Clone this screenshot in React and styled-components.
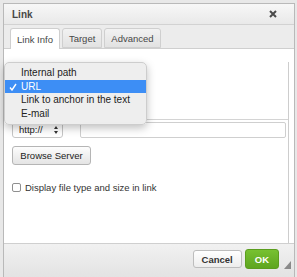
import React from 'react';
import styled, { createGlobalStyle } from 'styled-components';

const GlobalStyle = createGlobalStyle`
  html, body {
    margin: 0;
    padding: 0;
    background: #e8e8e8;
    font-family: "Liberation Sans", Arial, sans-serif;
    color: #333;
  }
`;

const Dialog = styled.div`
  position: relative;
  box-sizing: border-box;
  width: 292px;
  height: 274px;
  margin: 3px 0 0 3px;
  border: 1px solid #b9b9b9;
  border-bottom: none;
  background: #f0f0f0;
  display: flex;
  flex-direction: column;
`;

const TitleBar = styled.div`
  height: 20px;
  flex: none;
  display: flex;
  align-items: center;
  justify-content: space-between;
  padding: 0 17px 0 8px;
  background: linear-gradient(#f7f7f7, #e9e9e9);
  border-bottom: 1px solid #d2d2d2;
`;

const Title = styled.span`
  font-size: 10px;
  font-weight: bold;
  color: #474747;
`;

const Close = styled.svg`
  width: 8px;
  height: 8px;
  display: block;
`;

const TabStrip = styled.div`
  height: 24px;
  flex: none;
  box-sizing: border-box;
  display: flex;
  align-items: flex-end;
  gap: 2px;
  padding-left: 6px;
  background: #ececec;
  border-bottom: 1px solid #cfcfcf;
`;

const Tab = styled.div`
  box-sizing: border-box;
  height: ${(p) => (p.active ? '21px' : '20px')};
  margin-bottom: ${(p) => (p.active ? '-1px' : '0')};
  padding: 0 6px;
  display: flex;
  align-items: center;
  font-size: 9.5px;
  color: #474747;
  border: 1px solid #cfcfcf;
  border-bottom: ${(p) => (p.active ? 'none' : '1px solid #cfcfcf')};
  border-radius: 3px 3px 0 0;
  background: ${(p) => (p.active ? '#fff' : 'linear-gradient(#f2f2f2, #e2e2e2)')};
`;

const Content = styled.div`
  position: relative;
  flex: none;
  height: 195px;
  box-sizing: border-box;
  padding: 13px 5px 0 8px;
  background: #fff;
  border-bottom: 1px solid #cfcfcf;
`;

const Panel = styled.div`
  height: 100%;
  box-sizing: border-box;
  border-right: 1px solid #cdcdcd;
  font-size: 9.5px;
`;

/* link type select sits under the open menu */
const TypeField = styled.div`
  height: 57px;
`;

const Divider = styled.div`
  height: 1px;
  margin-left: 135px;
  background: #d4d4d4;
`;

const FieldRow = styled.div`
  display: flex;
  margin-top: 1px;
  padding-right: 2px;
  height: 17px;
`;

const Select = styled.div`
  box-sizing: border-box;
  width: 51px;
  height: 17px;
  border: 1px solid #c6c6c6;
  border-radius: 3px;
  background: #fff;
  display: flex;
  align-items: center;
  justify-content: space-between;
  padding: 0 4px 0 6px;
  font-size: 9.5px;
  color: #222;
`;

const Arrows = styled.svg`
  width: 4px;
  height: 8px;
  display: block;
`;

const TextInput = styled.div`
  flex: 1;
  margin-left: 17px;
  box-sizing: border-box;
  height: 16px;
  margin-top: 1px;
  border: 1px solid #cfcfcf;
  border-radius: 2px;
`;

const BrowseButton = styled.div`
  box-sizing: border-box;
  width: 79px;
  height: 19px;
  margin-top: 8px;
  border: 1px solid #b5b5b5;
  border-radius: 3px;
  background: linear-gradient(#fdfdfd, #e4e4e4);
  display: flex;
  align-items: center;
  justify-content: center;
  font-size: 9.5px;
  color: #222;
`;

const CheckRow = styled.label`
  display: flex;
  align-items: center;
  gap: 4px;
  margin-top: 17px;
  font-size: 9.5px;
  color: #333;
`;

const Box = styled.span`
  box-sizing: border-box;
  width: 9px;
  height: 9px;
  border: 1px solid #8f8f8f;
  border-radius: 2px;
  background: #fff;
`;

const Menu = styled.div`
  position: absolute;
  left: 0;
  top: 13px;
  box-sizing: border-box;
  width: 143px;
  padding: 3px 0 4px;
  background: rgba(238, 238, 238, 0.98);
  border: 1px solid #cdcdcd;
  border-radius: 5px;
  box-shadow: 0 3px 8px rgba(0, 0, 0, 0.25);
  font-size: 10px;
`;

const MenuItem = styled.div`
  height: 13.5px;
  display: flex;
  align-items: center;
  padding-left: 16px;
  position: relative;
  color: ${(p) => (p.selected ? '#fff' : '#222')};
  background: ${(p) => (p.selected ? '#3d8ef5' : 'transparent')};
`;

const Check = styled.svg`
  position: absolute;
  left: 4px;
  top: 3px;
  width: 8px;
  height: 8px;
`;

const Footer = styled.div`
  position: relative;
  flex: 1;
  display: flex;
  justify-content: flex-end;
  align-items: flex-start;
  gap: 3px;
  padding: 5px 15px 0 0;
  background: linear-gradient(#f1f1f1, #e3e3e3);
`;

const Button = styled.div`
  box-sizing: border-box;
  height: ${(p) => (p.primary ? '20px' : '18px')};
  margin-top: ${(p) => (p.primary ? '0' : '1px')};
  padding: 0 ${(p) => (p.primary ? '9px' : '8px')};
  display: flex;
  align-items: center;
  font-size: 9.5px;
  font-weight: bold;
  border-radius: 3px;
  color: ${(p) => (p.primary ? '#fff' : '#333')};
  border: 1px solid ${(p) => (p.primary ? '#5b9d1e' : '#bdbdbd')};
  background: ${(p) =>
    p.primary ? 'linear-gradient(#77c131, #5ea51f)' : 'linear-gradient(#ffffff, #ededed)'};
`;

const Grip = styled.svg`
  position: absolute;
  right: 3px;
  top: 17px;
  width: 7px;
  height: 8px;
`;

const items = ['Internal path', 'URL', 'Link to anchor in the text', 'E-mail'];

export default function App() {
  return (
    <>
      <GlobalStyle />
      <Dialog>
        <TitleBar>
          <Title>Link</Title>
          <Close viewBox="0 0 8 8">
            <path d="M1 1L7 7M7 1L1 7" stroke="#4a4a4a" strokeWidth="2" />
          </Close>
        </TitleBar>
        <TabStrip>
          <Tab active>Link Info</Tab>
          <Tab>Target</Tab>
          <Tab>Advanced</Tab>
        </TabStrip>
        <Content>
          <Panel>
            <TypeField />
            <Divider />
            <FieldRow>
              <Select>
                <span>http://</span>
                <Arrows viewBox="0 0 4 8">
                  <path d="M0 3L2 0L4 3Z M0 5L2 8L4 5Z" fill="#333" />
                </Arrows>
              </Select>
              <TextInput />
            </FieldRow>
            <BrowseButton>Browse Server</BrowseButton>
            <CheckRow>
              <Box />
              Display file type and size in link
            </CheckRow>
          </Panel>
          <Menu>
            {items.map((item) => (
              <MenuItem key={item} selected={item === 'URL'}>
                {item === 'URL' && (
                  <Check viewBox="0 0 8 8">
                    <path d="M1 4.5L3 7L7 1" stroke="#fff" strokeWidth="1.4" fill="none" />
                  </Check>
                )}
                {item}
              </MenuItem>
            ))}
          </Menu>
        </Content>
        <Footer>
          <Button>Cancel</Button>
          <Button primary>OK</Button>
          <Grip viewBox="0 0 7 8">
            <path d="M7 0L7 8L0 8Z" fill="#8a8a8a" />
          </Grip>
        </Footer>
      </Dialog>
    </>
  );
}
